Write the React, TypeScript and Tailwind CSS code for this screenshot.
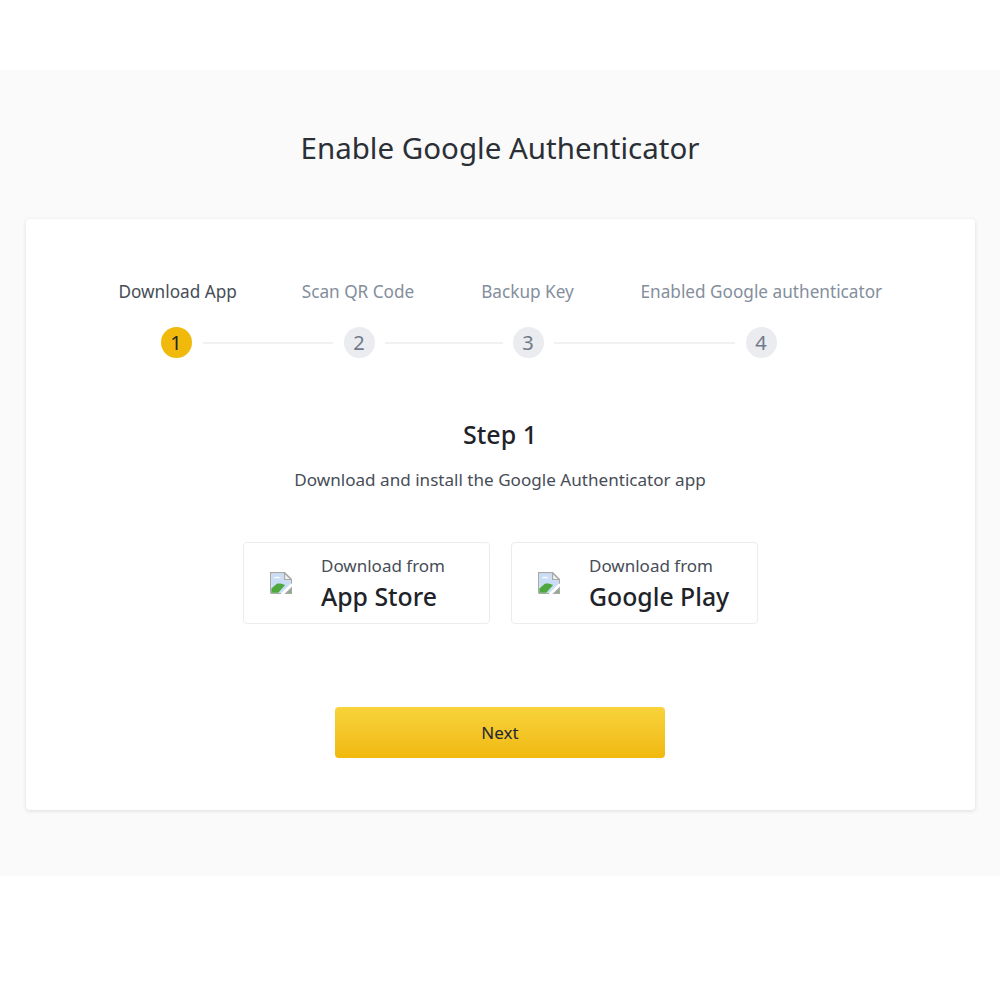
const font = "font-['Noto_Sans','Open_Sans',sans-serif]";

function BrokenImage() {
  return (
    <svg width="22" height="22" viewBox="0 0 16 16" className="shrink-0">
      <path d="M0.5 15.5V0.5H10.5L15.5 5.5V8.5" fill="none" stroke="#a8a8a8" strokeWidth="1" />
      <path d="M0.5 15.5H8" fill="none" stroke="#a8a8a8" strokeWidth="1" />
      <path d="M10.5 0.5V5.5H15.5Z" fill="#f0f0f0" stroke="#a8a8a8" strokeWidth="1" />
      <path d="M1 1H10V6H15V8.5L8.5 15H1Z" fill="#c9def6" />
      <path d="M2.5 4.5C3.5 3 6.5 3 8 4.5Z" fill="#fff" />
      <path d="M1 15V12L5 8.5C7 8 9 8.5 11 9.5L6 15Z" fill="#4fa83d" />
      <path d="M16 10.5V16H10.5Z" fill="#a8a8a8" />
      <path d="M15 13V15H13Z" fill="#6fb85f" />
    </svg>
  );
}

function Store({ name }: { name: string }) {
  return (
    <div className="flex h-[82px] w-[247px] items-center rounded border border-[#eaecef] pl-[26px]">
      <BrokenImage />
      <div className="ml-[29px] flex flex-col">
        <span className="text-[17px] leading-[24px] text-[#474d57]">Download from</span>
        <span className="mt-[1px] text-[24.8px] leading-[34px] font-medium text-[#1e2329]">{name}</span>
      </div>
    </div>
  );
}

function Circle({ n, active }: { n: number; active?: boolean }) {
  return (
    <div
      className={
        active
          ? "flex h-[31px] w-[31px] shrink-0 items-center justify-center rounded-full bg-[#f0b90b] text-[20px] text-[#1e2329]"
          : "flex h-[31px] w-[31px] shrink-0 items-center justify-center rounded-full bg-[#eaecef] text-[20px] text-[#707a8a]"
      }
    >
      {n}
    </div>
  );
}

function Line({ w }: { w: string }) {
  return <div className={`h-[2px] bg-[#f0f1f3] ${w}`} />;
}

export default function App() {
  return (
    <div className={`${font} min-h-[1000px] bg-white pt-[70px]`}>
      <div className="flex h-[806px] flex-col items-center bg-[#fafafa] px-[26px]">
        <h1 className="mt-[56px] text-[29.5px] leading-[44px] font-normal text-[#2b2f36]">Enable Google Authenticator</h1>
        <div className="mt-[49px] flex h-[591px] w-[949px] flex-col items-center rounded-sm bg-white shadow-[0_1px_4px_rgba(0,0,0,0.12)]">
          <div className="mt-[61px] flex w-full pl-[93px] text-[17.2px] leading-[24px] text-[#848e9c]">
            <span className="w-[117px] whitespace-nowrap text-center text-[#474d57]">Download App</span>
            <span className="ml-[66px] w-[113px] whitespace-nowrap text-center">Scan QR Code</span>
            <span className="ml-[66px] w-[94px] whitespace-nowrap text-center">Backup Key</span>
            <span className="ml-[66px] w-[240px] whitespace-nowrap text-center">Enabled Google authenticator</span>
          </div>
          <div className="mt-[23px] flex w-full items-center pl-[135px]">
            <Circle n={1} active />
            <div className="mx-[11px]"><Line w="w-[130px]" /></div>
            <Circle n={2} />
            <div className="mx-[10px]"><Line w="w-[118px]" /></div>
            <Circle n={3} />
            <div className="ml-[10px] mr-[11px]"><Line w="w-[181px]" /></div>
            <Circle n={4} />
          </div>
          <h2 className="mt-[60px] text-[25px] leading-[32px] font-medium text-[#1e2329]">Step 1</h2>
          <p className="mt-[18px] text-[17.1px] leading-[24px] text-[#474d57]">Download and install the Google Authenticator app</p>
          <div className="mt-[50px] flex gap-[21px] pl-px">
            <Store name="App Store" />
            <Store name="Google Play" />
          </div>
          <button className="mt-[83px] h-[51px] w-[330px] rounded bg-gradient-to-b from-[#f8d33a] to-[#f0b90b] text-[17px] font-normal text-[#212833]">
            Next
          </button>
        </div>
      </div>
    </div>
  );
}
